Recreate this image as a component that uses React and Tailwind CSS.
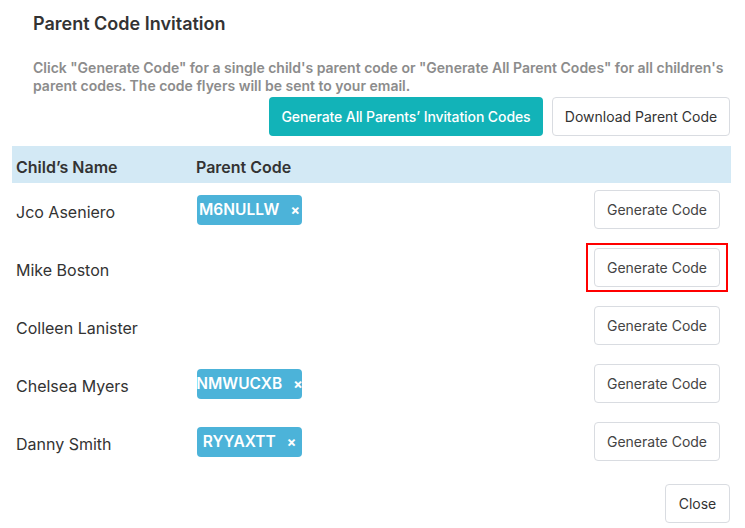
import React from 'react';

const children = [
  { name: 'Jco Aseniero', code: 'M6NULLW' },
  { name: 'Mike Boston', code: null, active: true },
  { name: 'Colleen Lanister', code: null },
  { name: 'Chelsea Myers', code: 'NMWUCXB' },
  { name: 'Danny Smith', code: 'RYYAXTT' },
];

const CodeBadge = ({ code }) => (
  <span className="flex h-[30px] w-[105px] items-center justify-center gap-[11px] overflow-hidden whitespace-nowrap rounded-[4px] bg-[#4cb3d9] text-[15.5px] font-semibold text-white">
    <span>{code}</span>
    <span className="text-[14px] font-bold">×</span>
  </span>
);

const GenerateButton = () => (
  <button className="h-[39px] w-[126px] rounded-[4px] border border-[#d9dce1] bg-white text-[14px] text-[#444]">
    Generate Code
  </button>
);

export default function App() {
  return (
    <div className="h-[528px] w-[745px] bg-white px-[12px] font-['Inter',sans-serif] text-[#333]">
      <h1 className="pl-[21px] pt-[10px] text-[18px] font-semibold leading-[28px]">Parent Code Invitation</h1>

      <p className="mt-[21px] pl-[21px] pr-0 text-[14px] font-semibold leading-[18px] text-[#8c8c8c]">
        Click "Generate Code" for a single child's parent code or "Generate All Parent Codes" for all children's
        parent codes. The code flyers will be sent to your email.
      </p>

      <div className="mt-[2px] flex justify-end gap-[9px] pr-[3px]">
        <button className="h-[39px] w-[274px] rounded-[4px] bg-[#12b3b8] text-[14px] font-medium tracking-[-0.1px] text-white">
          Generate All Parents’ Invitation Codes
        </button>
        <button className="h-[39px] w-[178px] rounded-[4px] border border-[#d9dce1] bg-white text-[14px] text-[#333]">
          Download Parent Code
        </button>
      </div>

      <div className="mt-[10px] w-[719px]">
        <div className="grid h-[37px] grid-cols-[184px_1fr] items-center bg-[#d3e9f5] pt-[5px] text-[16px] font-semibold">
          <span className="pl-[4px]">Child’s Name</span>
          <span>Parent Code</span>
        </div>

        {children.map((child) => (
          <div key={child.name} className="grid h-[58px] grid-cols-[184px_1fr_auto] items-center pb-[5px] text-[16px]">
            <span className="pl-[4px] pt-[5px]">{child.name}</span>
            <div className="pl-[1px]">{child.code && <CodeBadge code={child.code} />}</div>
            <div className="pr-[11px]">
              {child.active ? (
                <div className="relative">
                  <GenerateButton />
                  <span className="pointer-events-none absolute -inset-x-[8px] -inset-y-[5px] border-2 border-[#ff0000]" />
                </div>
              ) : (
                <GenerateButton />
              )}
            </div>
          </div>
        ))}
      </div>

      <div className="mt-[11px] flex justify-end pr-[3px]">
        <button className="h-[39px] w-[65px] rounded-[4px] border border-[#d9dce1] bg-white text-[14px] text-[#333]">
          Close
        </button>
      </div>
    </div>
  );
}
